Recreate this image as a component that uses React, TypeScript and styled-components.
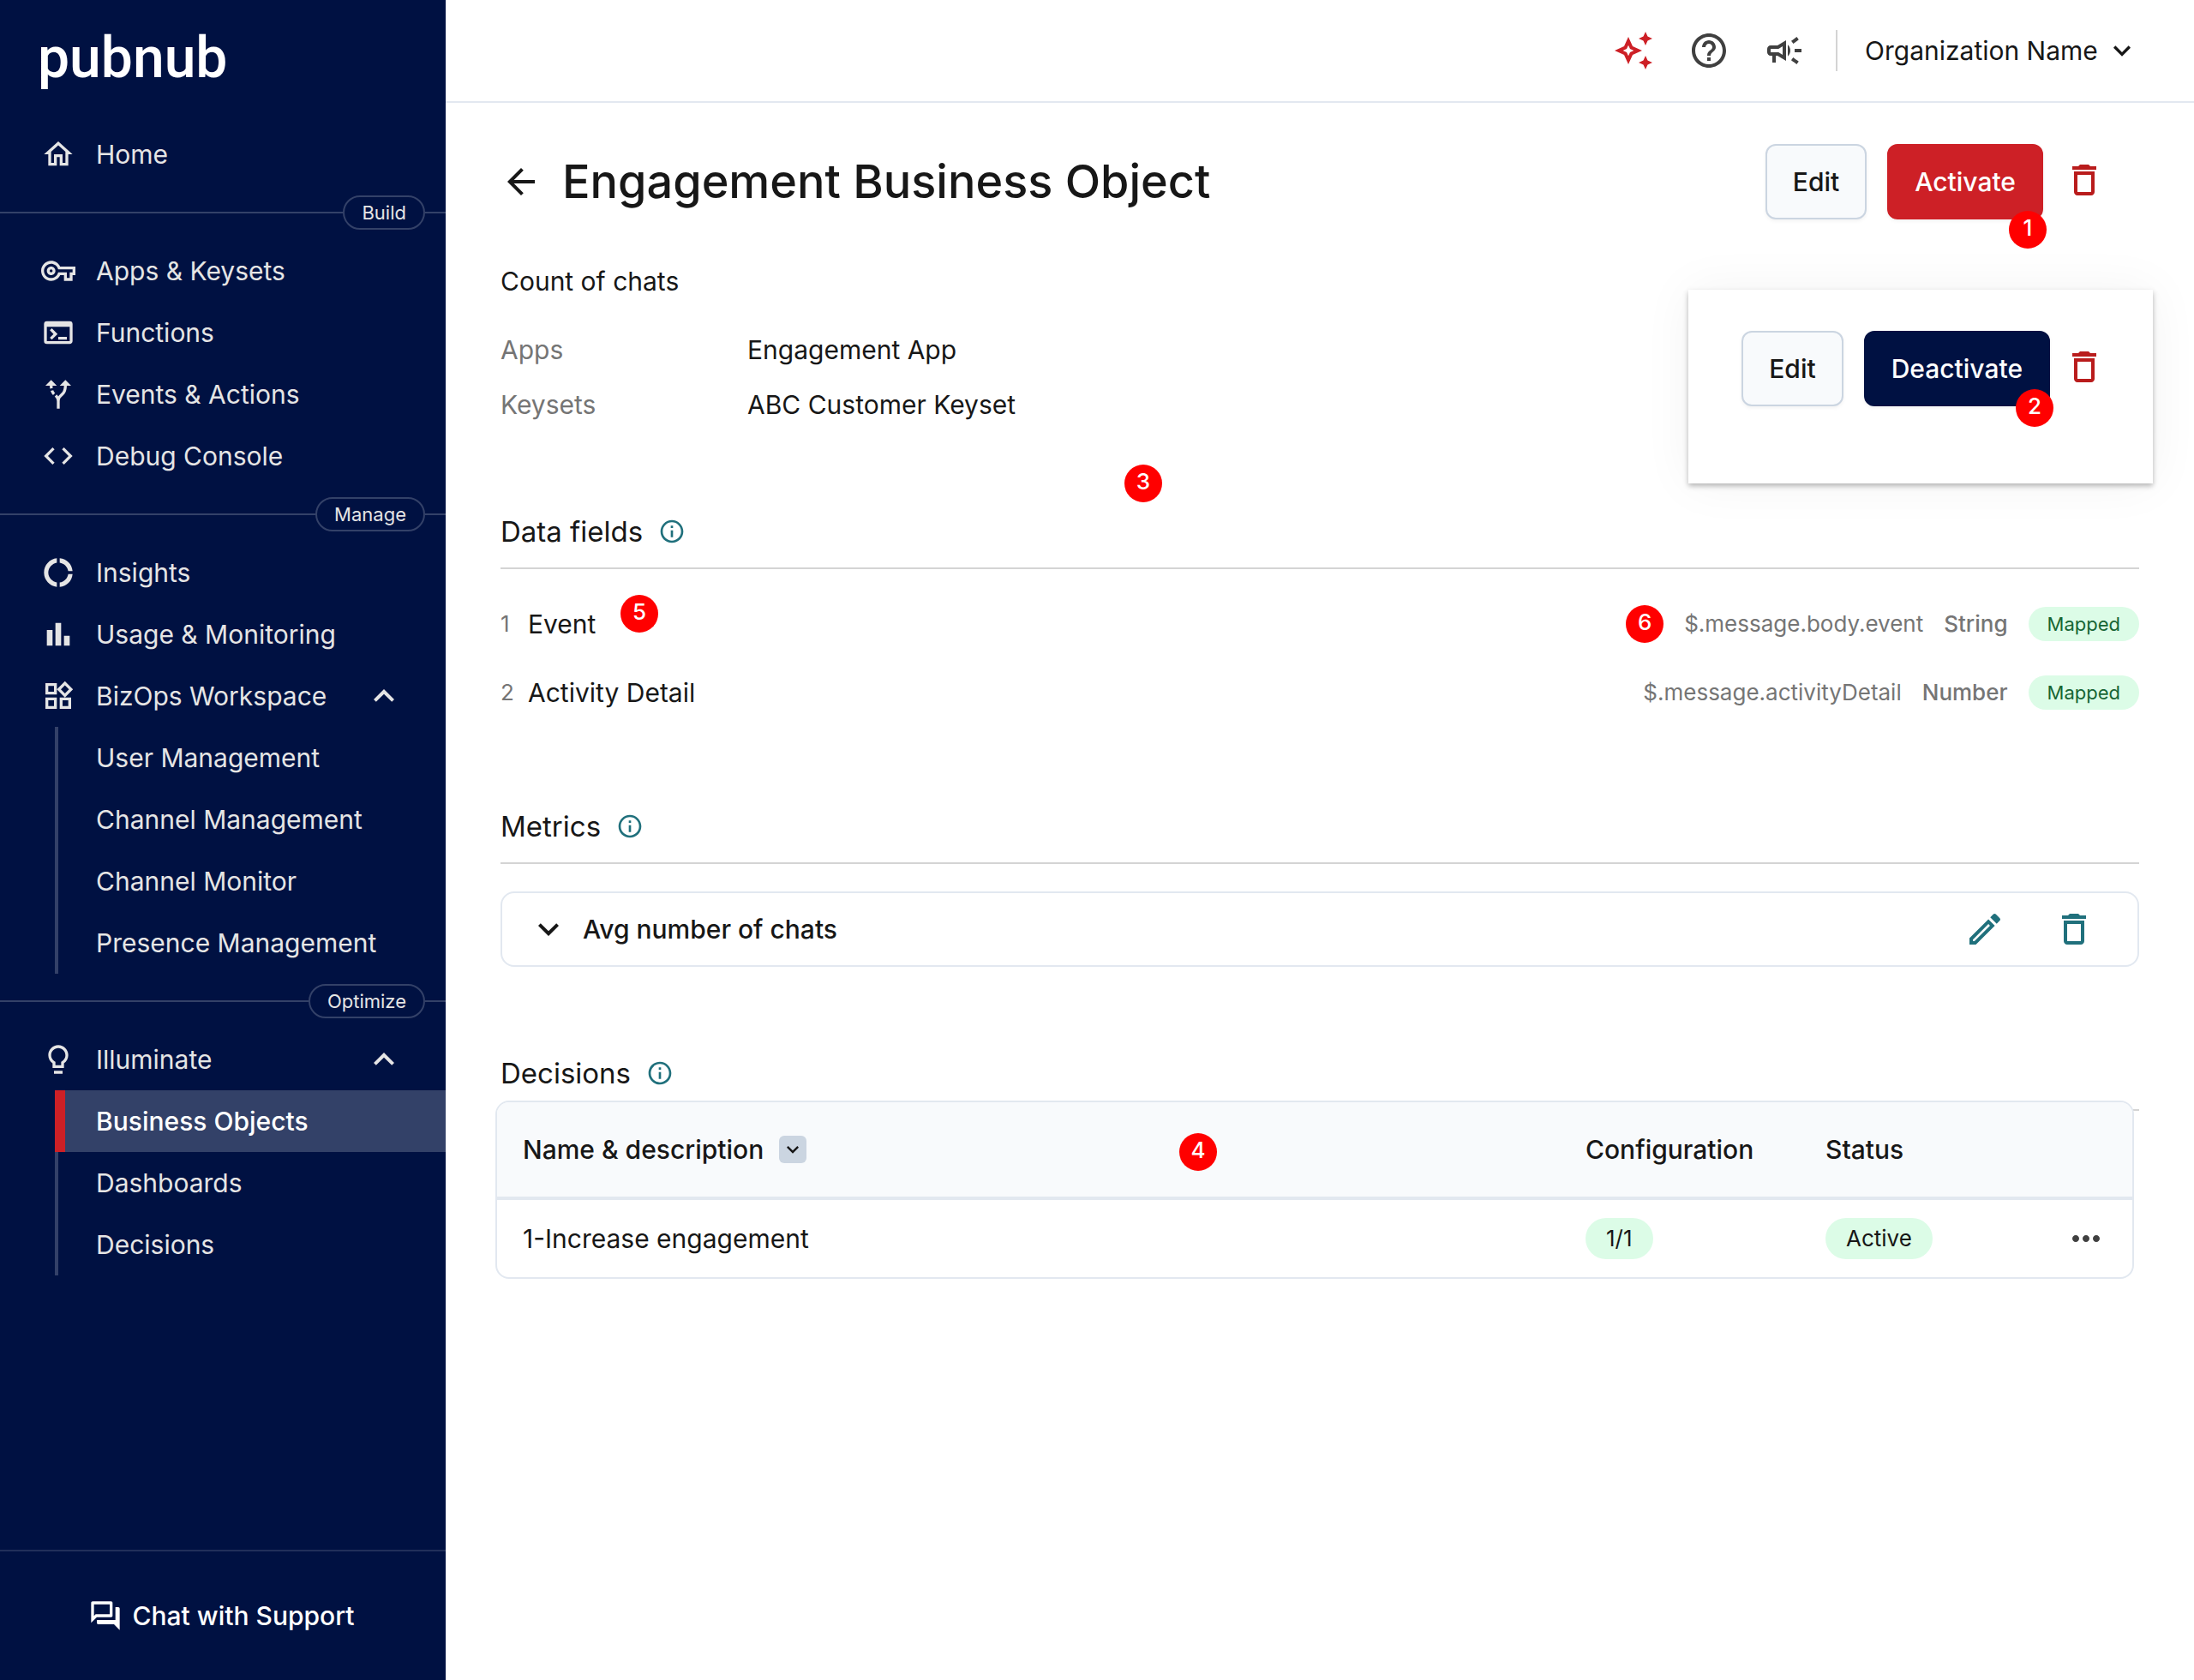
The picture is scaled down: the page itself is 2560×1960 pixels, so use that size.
import React from "react";
import styled, { createGlobalStyle, css } from "styled-components";
import {
  MdAltRoute,
  MdArrowBack,
  MdBarChart,
  MdCode,
  MdDonutLarge,
  MdExpandLess,
  MdExpandMore,
  MdHelpOutline,
  MdInfoOutline,
  MdMoreHoriz,
  MdOutlineAutoAwesome,
  MdOutlineCampaign,
  MdOutlineDelete,
  MdOutlineEdit,
  MdOutlineForum,
  MdOutlineHome,
  MdOutlineTerminal,
  MdOutlineVpnKey,
  MdOutlineWidgets,
} from "react-icons/md";

const color = {
  navy: "#001142",
  navyLine: "#334168",
  navText: "#e5e5e5",
  ink: "#171717",
  muted: "#757575",
  icon: "#404040",
  red: "#cd2026",
  redDark: "#b91c1c",
  pin: "#ff0000",
  teal: "#20707c",
  border: "#e2e8f0",
  borderStrong: "#cbd5e1",
  rule: "#d4d4d4",
  surface: "#f8fafc",
  greenBg: "#dcfce7",
  greenText: "#166534",
};

const GlobalStyle = createGlobalStyle`
  *, *::before, *::after { box-sizing: border-box; }
  body {
    margin: 0;
    background: #fff;
    color: ${color.ink};
    font-family: Inter, "Liberation Sans", sans-serif;
    font-size: 30px;
    line-height: 40px;
  }
  h1, h2, p, ul, dl, dd { margin: 0; padding: 0; }
  ul { list-style: none; }
  button, select { font: inherit; color: inherit; }
  a { color: inherit; text-decoration: none; }
  svg { display: block; flex: none; }
`;

/* ---------- Sidebar ---------- */

const Shell = styled.div`
  display: flex;
  min-height: 100vh;
`;

const Sidebar = styled.aside`
  flex: none;
  display: flex;
  flex-direction: column;
  width: 520px;
  background: ${color.navy};
  color: ${color.navText};
`;

const Brand = styled.a`
  padding: 28px 44px 36px;
  color: #fff;
  font-family: Roboto, sans-serif;
  font-size: 66px;
  font-weight: 500;
  line-height: 80px;
`;

const Nav = styled.nav`
  flex: 1;
`;

const itemBox = css`
  display: flex;
  align-items: center;
  height: 72px;
`;

const NavLink = styled.a`
  ${itemBox}
  gap: 24px;
  padding: 0 48px;
`;

const NavToggle = styled.button`
  ${itemBox}
  gap: 24px;
  width: 100%;
  padding: 0 48px;
  border: 0;
  background: none;
  text-align: left;
  cursor: pointer;
`;

const NavLabel = styled.span`
  flex: 1;
`;

const SubList = styled.ul`
  margin-left: 64px;
  border-left: 4px solid ${color.navyLine};
`;

const SubLink = styled.a<{ $active?: boolean }>`
  ${itemBox}
  padding-left: 44px;
  ${(p) =>
    p.$active &&
    css`
      margin-left: -4px;
      padding-left: 36px;
      border-left: 12px solid ${color.red};
      background: ${color.navyLine};
      color: #fff;
      font-weight: 500;
    `}
`;

const Divider = styled.div`
  display: flex;
  align-items: center;
  height: 64px;

  &::before,
  &::after {
    content: "";
    height: 2px;
    background: ${color.navyLine};
  }
  &::before { flex: 1; }
  &::after { width: 24px; }
`;

const DividerLabel = styled.span`
  padding: 0 20px;
  border: 2px solid ${color.navyLine};
  border-radius: 20px;
  font-size: 22px;
  line-height: 36px;
`;

const SupportLink = styled.a`
  display: flex;
  align-items: center;
  justify-content: center;
  gap: 12px;
  height: 152px;
  padding-right: 4px;
  border-top: 2px solid rgba(255, 255, 255, 0.13);
  color: #fff;
  font-weight: 500;
`;

function BulbIcon() {
  return (
    <svg width="40" height="40" viewBox="0 0 24 24" fill="currentColor" aria-hidden="true">
      <path d="M12 2C8.14 2 5 5.14 5 9c0 2.38 1.19 4.47 3 5.74V18h8v-3.26c1.81-1.27 3-3.36 3-5.74 0-3.86-3.14-7-7-7zm2 11.7V16h-4v-2.3C8.48 12.63 7 11.53 7 9c0-2.76 2.24-5 5-5s5 2.24 5 5c0 2.49-1.51 3.65-3 4.7zM9 20h6v2H9z" />
    </svg>
  );
}

type NavItem = { label: string; icon: React.ReactNode; children?: string[] };
type NavGroup = { title?: string; items: NavItem[] };

const navGroups: NavGroup[] = [
  { items: [{ label: "Home", icon: <MdOutlineHome size={40} /> }] },
  {
    title: "Build",
    items: [
      { label: "Apps & Keysets", icon: <MdOutlineVpnKey size={40} /> },
      { label: "Functions", icon: <MdOutlineTerminal size={40} /> },
      { label: "Events & Actions", icon: <MdAltRoute size={40} /> },
      { label: "Debug Console", icon: <MdCode size={40} /> },
    ],
  },
  {
    title: "Manage",
    items: [
      { label: "Insights", icon: <MdDonutLarge size={40} /> },
      { label: "Usage & Monitoring", icon: <MdBarChart size={40} /> },
      {
        label: "BizOps Workspace",
        icon: <MdOutlineWidgets size={40} />,
        children: ["User Management", "Channel Management", "Channel Monitor", "Presence Management"],
      },
    ],
  },
  {
    title: "Optimize",
    items: [
      {
        label: "Illuminate",
        icon: <BulbIcon />,
        children: ["Business Objects", "Dashboards", "Decisions"],
      },
    ],
  },
];

function NavEntry({ item }: { item: NavItem }) {
  if (!item.children) {
    return (
      <li>
        <NavLink href="#">
          {item.icon}
          <NavLabel>{item.label}</NavLabel>
        </NavLink>
      </li>
    );
  }
  return (
    <li>
      <NavToggle type="button" aria-expanded="true">
        {item.icon}
        <NavLabel>{item.label}</NavLabel>
        <MdExpandLess size={48} />
      </NavToggle>
      <SubList>
        {item.children.map((child) => (
          <li key={child}>
            <SubLink href="#" $active={child === "Business Objects"}>
              {child}
            </SubLink>
          </li>
        ))}
      </SubList>
    </li>
  );
}

/* ---------- Page frame ---------- */

const Page = styled.div`
  flex: 1;
  min-width: 0;
`;

const TopBar = styled.header`
  display: flex;
  align-items: center;
  justify-content: flex-end;
  gap: 36px;
  height: 120px;
  padding: 0 64px;
  border-bottom: 2px solid ${color.border};
`;

const IconRow = styled.div`
  display: flex;
  align-items: center;
  gap: 40px;
`;

const IconButton = styled.button<{ $color?: string }>`
  display: flex;
  padding: 0;
  border: 0;
  background: none;
  color: ${(p) => p.$color ?? color.icon};
  cursor: pointer;
`;

const OrgPicker = styled.label`
  position: relative;
  display: flex;
  align-items: center;
  padding-left: 32px;
  border-left: 2px solid ${color.rule};
  line-height: 48px;

  svg {
    position: absolute;
    right: 0;
    pointer-events: none;
  }
`;

const OrgSelect = styled.select`
  appearance: none;
  height: 48px;
  padding: 0 48px 0 0;
  border: 0;
  background: none;
`;

const Main = styled.main`
  position: relative;
  padding: 48px 64px;
`;

/* ---------- Shared parts ---------- */

const Pin = styled.span`
  display: inline-flex;
  flex: none;
  justify-content: center;
  width: 44px;
  height: 44px;
  border-radius: 50%;
  background: ${color.pin};
  color: #fff;
  font-size: 26px;
  font-weight: 500;
  line-height: 40px;
`;

const FloatingPin = styled(Pin)<{ $top?: number; $left?: number; $right?: number; $bottom?: number }>`
  position: absolute;
  z-index: 2;
  ${(p) => p.$top !== undefined && `top: ${p.$top}px;`}
  ${(p) => p.$left !== undefined && `left: ${p.$left}px;`}
  ${(p) => p.$right !== undefined && `right: ${p.$right}px;`}
  ${(p) => p.$bottom !== undefined && `bottom: ${p.$bottom}px;`}
`;

const PinAnchor = styled.span`
  position: relative;
  display: inline-flex;
`;

const buttonTone = {
  plain: css`
    border-color: ${color.borderStrong};
    background: ${color.surface};
    color: ${color.ink};
  `,
  danger: css`
    border-color: ${color.red};
    background: ${color.red};
    color: #fff;
  `,
  navy: css`
    border-color: ${color.navy};
    background: ${color.navy};
    color: #fff;
  `,
};

const Button = styled.button<{ $tone: keyof typeof buttonTone }>`
  height: 88px;
  padding: 0 30px;
  border: 2px solid;
  border-radius: 12px;
  font-weight: 500;
  box-shadow: 0 2px 4px rgba(0, 0, 0, 0.05);
  cursor: pointer;
  ${(p) => buttonTone[p.$tone]}
`;

const Actions = styled.div<{ $gap: number }>`
  display: flex;
  align-items: center;
  gap: ${(p) => p.$gap}px;
`;

const DeleteButton = styled(IconButton)`
  padding-bottom: 4px;
`;

const Tag = styled.span<{ $size: "small" | "large" }>`
  display: inline-block;
  border-radius: 24px;
  background: ${color.greenBg};
  ${(p) =>
    p.$size === "small"
      ? css`
          padding: 0 22px;
          color: ${color.greenText};
          font-size: 22px;
          line-height: 40px;
        `
      : css`
          padding: 0 24px;
          font-size: 26px;
          line-height: 48px;
          vertical-align: middle;
        `}
`;

/* ---------- Title area ---------- */

const TitleRow = styled.div`
  display: flex;
  align-items: center;
  justify-content: space-between;
  padding-right: 40px;
`;

const TitleGroup = styled.div`
  display: flex;
  align-items: center;
  gap: 24px;
`;

const Title = styled.h1`
  font-size: 54px;
  font-weight: 500;
  line-height: 64px;
`;

const Description = styled.p`
  margin-top: 52px;
`;

const Meta = styled.dl`
  display: grid;
  grid-template-columns: 288px 1fr;
  margin-top: 28px;
  line-height: 64px;

  dt { color: ${color.muted}; }
`;

const ActiveStatePanel = styled.aside`
  position: absolute;
  top: 218px;
  right: 48px;
  height: 226px;
  padding: 48px 56px 0 62px;
  background: #fff;
  box-shadow: 0 3px 6px rgba(0, 0, 0, 0.28), 0 0 56px rgba(0, 0, 0, 0.05);
`;

/* ---------- Sections ---------- */

const Section = styled.section`
  position: relative;
  margin-top: 96px;
`;

const SectionHead = styled.div`
  display: flex;
  align-items: center;
  gap: 18px;
  padding-bottom: 22px;
  border-bottom: 2px solid ${color.rule};
`;

const SectionTitle = styled.h2`
  font-size: 33px;
  font-weight: 400;
  line-height: 40px;
`;

const FieldList = styled.ul`
  padding-top: 24px;
`;

const FieldRow = styled.li`
  display: flex;
  align-items: center;
  gap: 24px;
  height: 80px;
`;

const FieldName = styled.div`
  position: relative;
  display: flex;
  align-items: center;
  flex: 1;
`;

const FieldIndex = styled.span`
  width: 32px;
  color: ${color.muted};
  font-size: 26px;
`;

const FieldMeta = styled.span<{ $strong?: boolean }>`
  color: ${color.muted};
  font-size: 26px;
  font-weight: ${(p) => (p.$strong ? 500 : 400)};
`;

const MetricCard = styled.div`
  display: flex;
  align-items: center;
  justify-content: space-between;
  height: 88px;
  margin: 32px 0 104px;
  padding: 0 50px 0 30px;
  border: 2px solid ${color.border};
  border-radius: 16px;
`;

const MetricToggle = styled.button`
  display: flex;
  align-items: center;
  gap: 16px;
  padding: 0;
  border: 0;
  background: none;
  font-weight: 500;
  cursor: pointer;
`;

const MetricActions = styled.div`
  display: flex;
  gap: 56px;
`;

const TableFrame = styled.div`
  position: relative;
  margin: -12px 6px 0 -6px;
  border: 2px solid ${color.border};
  border-radius: 16px;
  background: #fff;
  overflow: hidden;
`;

const Table = styled.table`
  width: 100%;
  border-collapse: separate;
  border-spacing: 0;
  table-layout: fixed;
  text-align: left;

  th,
  td { padding: 0 30px; }

  th {
    height: 114px;
    border-bottom: 4px solid ${color.border};
    background: ${color.surface};
    font-weight: 500;
  }

  td { height: 90px; }
`;

const Col = styled.col<{ $width?: number }>`
  width: ${(p) => (p.$width ? `${p.$width}px` : "auto")};
`;

const SortLabel = styled.span`
  display: flex;
  align-items: center;
  gap: 18px;
`;

const SortButton = styled(IconButton)`
  align-items: center;
  justify-content: center;
  width: 32px;
  height: 32px;
  border-radius: 6px;
  background: ${color.borderStrong};
`;

function InfoButton({ topic }: { topic: string }) {
  return (
    <IconButton type="button" $color={color.teal} aria-label={`About ${topic}`}>
      <MdInfoOutline size={32} />
    </IconButton>
  );
}

const fields = [
  { name: "Event", path: "$.message.body.event", type: "String" },
  { name: "Activity Detail", path: "$.message.activityDetail", type: "Number" },
];

export default function App() {
  return (
    <>
      <GlobalStyle />
      <Shell>
        <Sidebar>
          <Brand href="#">pubnub</Brand>
          <Nav aria-label="Main">
            {navGroups.map((group, i) => (
              <React.Fragment key={i}>
                {group.title && (
                  <Divider>
                    <DividerLabel>{group.title}</DividerLabel>
                  </Divider>
                )}
                <ul>
                  {group.items.map((item) => (
                    <NavEntry key={item.label} item={item} />
                  ))}
                </ul>
              </React.Fragment>
            ))}
          </Nav>
          <SupportLink href="#">
            <MdOutlineForum size={40} />
            Chat with Support
          </SupportLink>
        </Sidebar>

        <Page>
          <TopBar>
            <IconRow>
              <IconButton type="button" $color={color.red} aria-label="What's new">
                <MdOutlineAutoAwesome size={48} />
              </IconButton>
              <IconButton type="button" aria-label="Help">
                <MdHelpOutline size={48} />
              </IconButton>
              <IconButton type="button" aria-label="Announcements">
                <MdOutlineCampaign size={48} />
              </IconButton>
            </IconRow>
            <OrgPicker>
              <OrgSelect aria-label="Organization">
                <option>Organization Name</option>
              </OrgSelect>
              <MdExpandMore size={40} />
            </OrgPicker>
          </TopBar>

          <Main>
            <TitleRow>
              <TitleGroup>
                <IconButton type="button" $color={color.ink} aria-label="Back">
                  <MdArrowBack size={48} />
                </IconButton>
                <Title>Engagement Business Object</Title>
              </TitleGroup>
              <Actions $gap={24}>
                <Button type="button" $tone="plain">Edit</Button>
                <PinAnchor>
                  <Button type="button" $tone="danger">Activate</Button>
                  <FloatingPin $right={-4} $bottom={-34}>1</FloatingPin>
                </PinAnchor>
                <DeleteButton type="button" $color={color.redDark} aria-label="Delete">
                  <MdOutlineDelete size={48} />
                </DeleteButton>
              </Actions>
            </TitleRow>

            <Description>Count of chats</Description>
            <Meta>
              <dt>Apps</dt>
              <dd>Engagement App</dd>
              <dt>Keysets</dt>
              <dd>ABC Customer Keyset</dd>
            </Meta>

            <ActiveStatePanel>
              <Actions $gap={16}>
                <Actions $gap={24}>
                  <Button type="button" $tone="plain">Edit</Button>
                  <PinAnchor>
                    <Button type="button" $tone="navy">Deactivate</Button>
                    <FloatingPin $right={-4} $bottom={-24}>2</FloatingPin>
                  </PinAnchor>
                </Actions>
                <DeleteButton type="button" $color={color.redDark} aria-label="Delete">
                  <MdOutlineDelete size={48} />
                </DeleteButton>
              </Actions>
            </ActiveStatePanel>

            <Section>
              <FloatingPin $top={-58} $left={728}>3</FloatingPin>
              <SectionHead>
                <SectionTitle>Data fields</SectionTitle>
                <InfoButton topic="data fields" />
              </SectionHead>
              <FieldList>
                {fields.map((field, i) => (
                  <FieldRow key={field.name}>
                    <FieldName>
                      <FieldIndex>{i + 1}</FieldIndex>
                      {field.name}
                      {i === 0 && <FloatingPin $top={-14} $left={140}>5</FloatingPin>}
                    </FieldName>
                    {i === 0 && <Pin>6</Pin>}
                    <FieldMeta>{field.path}</FieldMeta>
                    <FieldMeta $strong>{field.type}</FieldMeta>
                    <Tag $size="small">Mapped</Tag>
                  </FieldRow>
                ))}
              </FieldList>
            </Section>

            <Section>
              <SectionHead>
                <SectionTitle>Metrics</SectionTitle>
                <InfoButton topic="metrics" />
              </SectionHead>
              <MetricCard>
                <MetricToggle type="button" aria-expanded="false">
                  <MdExpandMore size={48} />
                  Avg number of chats
                </MetricToggle>
                <MetricActions>
                  <IconButton type="button" $color={color.teal} aria-label="Edit metric">
                    <MdOutlineEdit size={48} />
                  </IconButton>
                  <IconButton type="button" $color={color.teal} aria-label="Delete metric">
                    <MdOutlineDelete size={48} />
                  </IconButton>
                </MetricActions>
              </MetricCard>
            </Section>

            <Section>
              <SectionHead>
                <SectionTitle>Decisions</SectionTitle>
                <InfoButton topic="decisions" />
              </SectionHead>
              <TableFrame>
                <FloatingPin $top={36} $left={796}>4</FloatingPin>
                <Table>
                  <colgroup>
                    <Col />
                    <Col $width={280} />
                    <Col $width={280} />
                    <Col $width={108} />
                  </colgroup>
                  <thead>
                    <tr>
                      <th scope="col">
                        <SortLabel>
                          Name &amp; description
                          <SortButton type="button" $color={color.ink} aria-label="Sort by name">
                            <MdExpandMore size={28} />
                          </SortButton>
                        </SortLabel>
                      </th>
                      <th scope="col">Configuration</th>
                      <th scope="col">Status</th>
                      <th aria-label="Row actions" />
                    </tr>
                  </thead>
                  <tbody>
                    <tr>
                      <td>1-Increase engagement</td>
                      <td>
                        <Tag $size="large">1/1</Tag>
                      </td>
                      <td>
                        <Tag $size="large">Active</Tag>
                      </td>
                      <td>
                        <IconButton type="button" aria-label="More actions">
                          <MdMoreHoriz size={48} />
                        </IconButton>
                      </td>
                    </tr>
                  </tbody>
                </Table>
              </TableFrame>
            </Section>
          </Main>
        </Page>
      </Shell>
    </>
  );
}
